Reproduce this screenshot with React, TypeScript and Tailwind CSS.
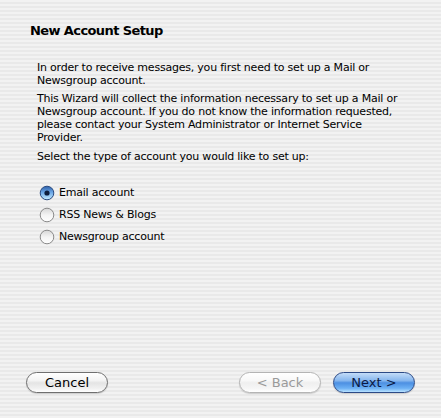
import React, { useState } from 'react';

const font = { fontFamily: '"DejaVu Sans", "Liberation Sans", sans-serif' };

type Kind = 'email' | 'rss' | 'news';

const options: { id: Kind; label: string }[] = [
  { id: 'email', label: 'Email account' },
  { id: 'rss', label: 'RSS News & Blogs' },
  { id: 'news', label: 'Newsgroup account' },
];

const Radio = ({ checked }: { checked: boolean }) => (
  <svg width="16" height="16" viewBox="0 0 16 16" className="shrink-0">
    <defs>
      <linearGradient id="rOff" x1="0" y1="0" x2="0" y2="1">
        <stop offset="0" stopColor="#d6d6d6" />
        <stop offset="0.5" stopColor="#f4f4f4" />
        <stop offset="1" stopColor="#ffffff" />
      </linearGradient>
      <linearGradient id="rOn" x1="0" y1="0" x2="0" y2="1">
        <stop offset="0" stopColor="#2d5fa8" />
        <stop offset="0.45" stopColor="#6aa6e6" />
        <stop offset="1" stopColor="#c6ecff" />
      </linearGradient>
    </defs>
    <circle cx="8" cy="8" r="6.8" fill={checked ? 'url(#rOn)' : 'url(#rOff)'} stroke={checked ? '#2a4a80' : '#8a8a8a'} strokeWidth="1" />
    {checked && <circle cx="8" cy="8" r="2.6" fill="#0d1d3d" />}
  </svg>
);

const AquaButton = ({
  children,
  variant = 'plain',
}: {
  children: React.ReactNode;
  variant?: 'plain' | 'default' | 'disabled';
}) => {
  const styles = {
    plain:
      'border-[#6f6f6f] text-black bg-[image:linear-gradient(to_bottom,#ffffff_0%,#f3f3f3_40%,#e4e4e4_52%,#f0f0f0_80%,#ffffff_100%)]',
    disabled:
      'border-[#b4b4b4] text-[#9a9a9a] bg-[image:linear-gradient(to_bottom,#ffffff_0%,#f8f8f8_40%,#efefef_52%,#f6f6f6_80%,#ffffff_100%)]',
    default:
      'border-[#2c4a86] text-[#0b1a46] bg-[image:linear-gradient(to_bottom,#c3dcf8_0%,#86b6ee_40%,#4c8fe2_52%,#6cb0f4_80%,#b9e2ff_100%)]',
  }[variant];
  return (
    <button
      className={`h-[21px] w-[82px] rounded-full border text-[13px] leading-none flex items-center justify-center shadow-[0_1px_1px_rgba(0,0,0,0.15)] ${styles}`}
      style={font}
    >
      {children}
    </button>
  );
};

export default function App() {
  const [kind, setKind] = useState<Kind>('email');

  return (
    <div
      className="w-[441px] h-[418px] flex flex-col text-black bg-[image:repeating-linear-gradient(to_bottom,#f2f2f2_0px,#f2f2f2_2px,#e9e9e9_2px,#e9e9e9_4px)]"
      style={font}
    >
      <h1 className="pl-[30px] pt-[22px] text-[13px] font-bold leading-[17px] tracking-[-0.6px]">New Account Setup</h1>

      <div className="pl-[37px] pr-[20px] pt-[22px] text-[11px] leading-[13.3px] tracking-[-0.22px] flex flex-col gap-[4px]">
        <p>
          In order to receive messages, you first need to set up a Mail or
          <br />
          Newsgroup account.
        </p>
        <p>
          This Wizard will collect the information necessary to set up a Mail or
          <br />
          Newsgroup account. If you do not know the information requested,
          <br />
          please contact your System Administrator or Internet Service
          <br />
          Provider.
        </p>
        <p className="pt-[1px]">Select the type of account you would like to set up:</p>
      </div>

      <div className="pl-[39px] pt-[22px] flex flex-col gap-[6px] text-[11px] tracking-[-0.22px]">
        {options.map((o) => (
          <label key={o.id} className="flex items-center gap-[4px] h-[16px] cursor-default" onClick={() => setKind(o.id)}>
            <Radio checked={kind === o.id} />
            <span>{o.label}</span>
          </label>
        ))}
      </div>

      <div className="mt-auto pb-[25px] pl-[26px] pr-[26px] flex items-center justify-between">
        <AquaButton>Cancel</AquaButton>
        <div className="flex gap-[12px]">
          <AquaButton variant="disabled">&lt; Back</AquaButton>
          <AquaButton variant="default">Next &gt;</AquaButton>
        </div>
      </div>
    </div>
  );
}
